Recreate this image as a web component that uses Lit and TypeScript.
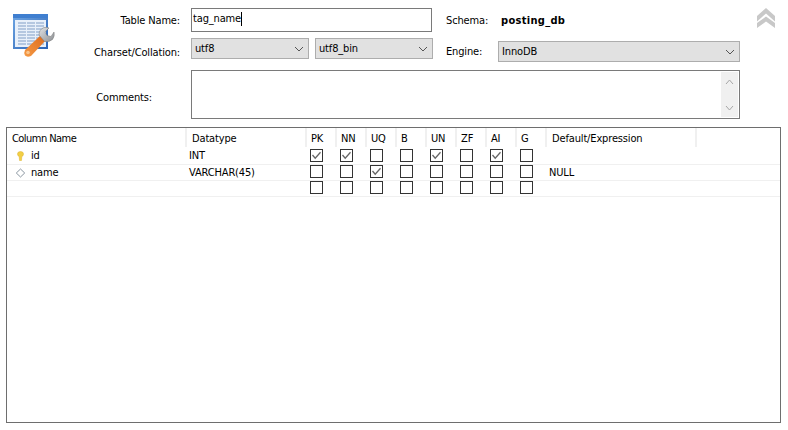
import { LitElement, html, css, svg } from "lit";
import { customElement } from "lit/decorators.js";

const COLS = ["PK", "NN", "UQ", "B", "UN", "ZF", "AI", "G"];
const ROWS = [
  { name: "id", type: "INT", def: "", icon: "key", checks: [1, 1, 0, 0, 1, 0, 1, 0] },
  { name: "name", type: "VARCHAR(45)", def: "NULL", icon: "diamond", checks: [0, 0, 1, 0, 0, 0, 0, 0] },
  { name: "", type: "", def: "", icon: "", checks: [0, 0, 0, 0, 0, 0, 0, 0] },
];

const chevron = svg`<polyline points="1,4 5,8 9,4"></polyline>`;

@customElement("app-root")
export class AppRoot extends LitElement {
  static styles = css`
    :host {
      display: block;
      width: 788px;
      height: 430px;
      background: #fff;
      font-family: "DejaVu Sans", "Liberation Sans", sans-serif;
      font-stretch: condensed;
      font-size: 11px;
      line-height: 14px;
      letter-spacing: -0.15px;
      color: #000;
      overflow: hidden;
    }
    .top {
      display: flex;
      height: 127px;
      box-sizing: border-box;
      padding: 8px 0 0 12px;
    }
    .logo {
      width: 44px;
      height: 44px;
      margin-top: 6px;
      flex: none;
    }
    .form {
      display: grid;
      grid-template-columns: 135px 118px 6px 118px 13px 52px 242px;
      grid-template-rows: 24px 24px 51px;
      row-gap: 6px;
      flex: none;
      height: 111px;
    }
    .label {
      display: flex;
      align-items: center;
      justify-content: flex-end;
      padding: 1px 11px 0 0;
    }
    .label.low {
      align-self: end;
      height: 21px;
      box-sizing: border-box;
      padding-top: 2px;
    }
    .label.cmt {
      padding: 8px 39px 0 0;
    }
    .input {
      grid-column: 2 / span 3;
      width: 241px;
      box-sizing: border-box;
      border: 1px solid #7a7a7a;
      display: flex;
      align-items: center;
      padding: 0 0 3px 1px;
    }
    .caret {
      width: 1px;
      height: 14px;
      background: #000;
    }
    .combo {
      box-sizing: border-box;
      height: 21px;
      background: #e1e1e1;
      border: 1px solid #adadad;
      display: flex;
      align-items: center;
      justify-content: space-between;
      padding: 1px 4px 0 3px;
    }
    .combo svg {
      width: 10px;
      height: 12px;
      fill: none;
      stroke: #555;
      stroke-width: 1;
    }
    .side {
      display: flex;
      align-items: center;
      padding-top: 1px;
    }
    .side.end {
      align-self: end;
      box-sizing: border-box;
      height: 21px;
    }
    .side b {
      font-weight: 700;
      letter-spacing: 0.3px;
      padding-left: 3px;
    }
    .engine {
      align-self: end;
    }
    .comments {
      grid-column: 2 / span 6;
      box-sizing: border-box;
      margin-top: 2px;
      border: 1px solid #7a7a7a;
      display: flex;
      justify-content: flex-end;
      padding: 1px;
    }
    .scroll {
      width: 17px;
      background: #f0f0f0;
      display: flex;
      flex-direction: column;
      justify-content: space-between;
      align-items: center;
      padding: 7px 0 6px;
    }
    .scroll svg {
      width: 9px;
      height: 6px;
      fill: none;
      stroke: #a6a6a6;
      stroke-width: 1;
    }
    .up {
      width: 18px;
      height: 20px;
      margin: 0 0 0 17px;
      flex: none;
    }
    .grid {
      box-sizing: border-box;
      margin-left: 6px;
      width: 775px;
      height: 296px;
      border: 1px solid #6e6e6e;
    }
    .row {
      display: grid;
      grid-template-columns: 180px 120px repeat(8, 30px) 150px;
      height: 16px;
      box-sizing: border-box;
      border-bottom: 1px solid #f0f0f0;
    }
    .row.head {
      height: 20px;
      border-bottom: none;
    }
    .row.first {
      height: 17px;
    }
    .head > div {
      border-right: 2px solid #f0f0f0;
      padding: 4px 0 0 5px;
      box-sizing: border-box;
      height: 19px;
    }
    .head > div.chk {
      padding-left: 4px;
    }
    .head > div.cn {
      letter-spacing: -0.55px;
    }
    .cell {
      display: flex;
      align-items: center;
      padding: 0 0 0 2px;
      white-space: nowrap;
    }
    .cell.nm {
      padding-left: 9px;
      gap: 6px;
    }
    .cell svg.ic {
      width: 9px;
      height: 10px;
      flex: none;
    }
    .cb {
      display: flex;
      align-items: flex-start;
      padding-left: 3px;
    }
    .first .cb {
      padding-top: 1px;
    }
    .box {
      width: 13px;
      height: 13px;
      box-sizing: border-box;
      border: 1px solid #333;
      background: #fff;
    }
    .box svg {
      display: block;
      width: 11px;
      height: 11px;
      fill: none;
      stroke: #666;
      stroke-width: 1.3;
    }
  `;

  private logo() {
    return svg`<svg class="logo" viewBox="0 0 44 44">
      <defs>
        <linearGradient id="fr" x1="0" y1="0" x2="1" y2="1">
          <stop offset="0" stop-color="#6fa6e3"></stop>
          <stop offset="1" stop-color="#2a62b4"></stop>
        </linearGradient>
        <linearGradient id="or" x1="0" y1="1" x2="1" y2="0">
          <stop offset="0" stop-color="#f59a45"></stop>
          <stop offset="1" stop-color="#dd6a1c"></stop>
        </linearGradient>
        <linearGradient id="me" x1="0" y1="0" x2="1" y2="1">
          <stop offset="0" stop-color="#e2e4e6"></stop>
          <stop offset="1" stop-color="#8b8e92"></stop>
        </linearGradient>
      </defs>
      <rect x="1" y="0" width="35" height="35" fill="url(#fr)"></rect>
      <rect x="1" y="0" width="35" height="4" fill="#3f7fd0"></rect>
      <rect x="3" y="6" width="31" height="27" fill="#e8f0fa"></rect>
      ${[8, 11, 14, 17, 20, 23, 26, 29].map(
        (y) => svg`
          <rect x="6" y="${y}" width="8" height="2" fill="#b4c7e0"></rect>
          <rect x="15" y="${y}" width="8" height="2" fill="#b4c7e0"></rect>
          <rect x="24" y="${y}" width="8" height="2" fill="#b4c7e0"></rect>`,
      )}
      <path d="M13 36 L29 21 L34 26 L19 42 Q15 43.5 13 41.5 Q11.5 39 13 36 Z" fill="url(#or)"></path>
      <circle cx="16" cy="38.5" r="1.8" fill="#f9c58b"></circle>
      <path d="M27 21 Q27 15.5 32 13.5 Q35 13 37 14 L33 18 L35 21.5 L39 22.5 L42 18 Q43 22 40.5 25.5 Q37 28.5 32.5 27.5 Z" fill="url(#me)" stroke="#777" stroke-width=".5"></path>
    </svg>`;
  }

  private icon(kind: string) {
    if (kind === "key")
      return svg`<svg class="ic" viewBox="0 0 9 10"><path d="M1.5 3 Q1.5 .5 4.5 .5 Q7.5 .5 7.5 3 Q7.5 5 5.8 5.5 L5.5 9.5 L3.5 9.5 L3.2 5.5 Q1.5 5 1.5 3 Z" fill="#f2cf45" stroke="#dcb02c" stroke-width=".5"></path></svg>`;
    if (kind === "diamond")
      return svg`<svg class="ic" viewBox="0 0 9 10"><path d="M4.5 1 L8.7 5 L4.5 9 L.3 5 Z" fill="#fff" stroke="#7d8a96" stroke-width=".9"></path></svg>`;
    return html`<svg class="ic" viewBox="0 0 9 10"></svg>`;
  }

  render() {
    return html`
      <div class="top">
        ${this.logo()}
        <div class="form">
          <div class="label">Table Name:</div>
          <div class="input">tag_name<span class="caret"></span></div>
          <div></div>
          <div class="side">Schema:</div>
          <div class="side"><b>posting_db</b></div>

          <div class="label low">Charset/Collation:</div>
          <div class="combo">utf8 <svg viewBox="0 0 10 12">${chevron}</svg></div>
          <div></div>
          <div class="combo">utf8_bin <svg viewBox="0 0 10 12">${chevron}</svg></div>
          <div></div>
          <div class="side end">Engine:</div>
          <div class="combo engine">InnoDB <svg viewBox="0 0 10 12">${chevron}</svg></div>

          <div class="label cmt">Comments:</div>
          <div class="comments">
            <div class="scroll">
              <svg viewBox="0 0 9 6"><polyline points="1,5 4.5,1 8,5"></polyline></svg>
              <svg viewBox="0 0 9 6"><polyline points="1,1 4.5,5 8,1"></polyline></svg>
            </div>
          </div>
        </div>
        <svg class="up" viewBox="0 0 18 20" fill="#c8c8c8">
          <path d="M9 0 L18 8 L18 13.5 L9 5.5 L0 13.5 L0 8 Z M9 8.5 L18 15 L18 20 L9 13.5 L0 20 L0 15 Z"></path>
        </svg>
      </div>
      <div class="grid">
        <div class="row head">
          <div class="cn">Column Name</div>
          <div>Datatype</div>
          ${COLS.map((c) => html`<div class="chk">${c}</div>`)}
          <div>Default/Expression</div>
        </div>
        ${ROWS.map(
          (r, i) => html`
            <div class="row ${i === 0 ? "first" : ""}">
              <div class="cell nm">${this.icon(r.icon)}<span>${r.name}</span></div>
              <div class="cell">${r.type}</div>
              ${r.checks.map(
                (c) => html`<div class="cb">
                  <div class="box">
                    ${c
                      ? html`<svg viewBox="0 0 11 11"><polyline points="1.5,5 4.2,8.2 9.5,2.2"></polyline></svg>`
                      : ""}
                  </div>
                </div>`,
              )}
              <div class="cell">${r.def}</div>
            </div>
          `,
        )}
      </div>
    `;
  }
}
